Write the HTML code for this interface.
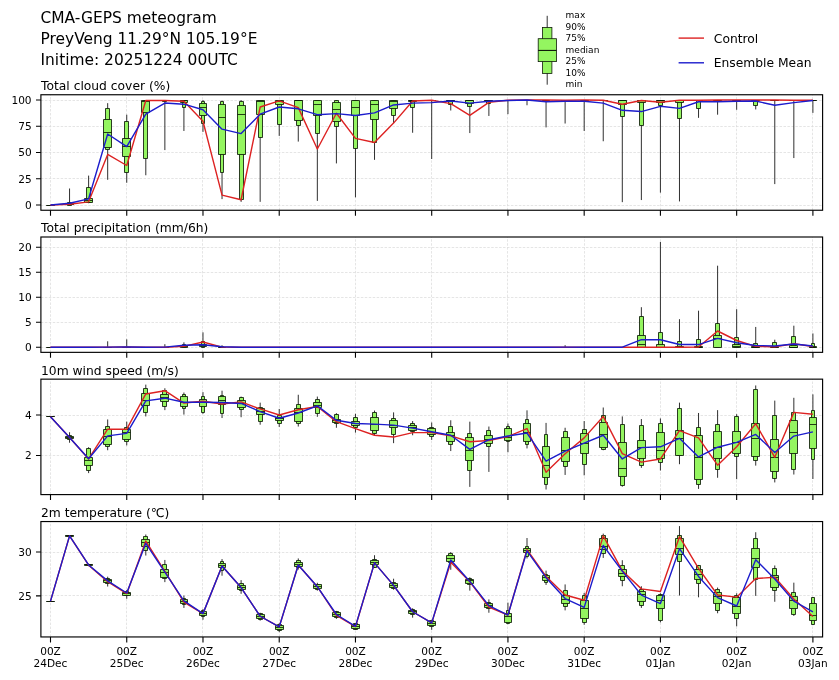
<!DOCTYPE html>
<html lang="en"><head><meta charset="utf-8"><title>CMA-GEPS meteogram</title>
<style>html,body{margin:0;padding:0;background:#fff}svg{display:block;will-change:transform}</style></head>
<body>
<svg width="839" height="680" viewBox="0 0 839 680" font-family="'DejaVu Sans', 'Liberation Sans', sans-serif" fill="#000">
<rect width="839" height="680" fill="#fff"/>
<g font-size="15.45">
<text x="40.5" y="22.5">CMA-GEPS meteogram</text>
<text x="40.5" y="43.6">PreyVeng 11.29°N 105.19°E</text>
<text x="40.5" y="64.7">Initime: 20251224 00UTC</text>
</g>
<g id="legend">
<line x1="547.2" y1="15.8" x2="547.2" y2="84.7" stroke="#303030" stroke-width="1"/>
<rect x="542.6" y="27.5" width="9.3" height="45.9" fill="#94f560" stroke="#0d1a07" stroke-width="0.8"/>
<rect x="538.2" y="38.7" width="18.2" height="22.9" fill="#94f560" stroke="#0d1a07" stroke-width="0.8"/>
<line x1="538.2" y1="50.4" x2="556.4" y2="50.4" stroke="#000" stroke-width="1"/>
<g font-size="9">
<text x="565.6" y="18.45">max</text>
<text x="565.6" y="29.9">90%</text>
<text x="565.6" y="41.35">75%</text>
<text x="565.6" y="52.8">median</text>
<text x="565.6" y="64.25">25%</text>
<text x="565.6" y="75.7">10%</text>
<text x="565.6" y="87.15">min</text>
</g>
<line x1="678.6" y1="38.1" x2="704" y2="38.1" stroke="#dd2222" stroke-width="1.4"/>
<line x1="678.6" y1="62.8" x2="704" y2="62.8" stroke="#1c1ccc" stroke-width="1.4"/>
<g font-size="12.3"><text x="713.8" y="42.5">Control</text><text x="713.8" y="67">Ensemble Mean</text></g>
</g>
<g id="panel0">
<text x="41" y="89.6" font-size="12.3">Total cloud cover (%)</text>
<clipPath id="c0"><rect x="40.9" y="94.75" width="781.7" height="115.5"/></clipPath>
<path d="M40.9 205.5H822.6M40.9 178.5H822.6M40.9 152.5H822.6M40.9 126.5H822.6M40.9 100.5H822.6M50.5 210.25V94.75M126.5 210.25V94.75M202.5 210.25V94.75M279.5 210.25V94.75M355.5 210.25V94.75M431.5 210.25V94.75M507.5 210.25V94.75M584.5 210.25V94.75M660.5 210.25V94.75M736.5 210.25V94.75M812.5 210.25V94.75" stroke="#dadada" stroke-width="0.7" stroke-dasharray="2.5 1.45" fill="none"/>
<g clip-path="url(#c0)">
<path d="M50.5 205V205M69.56 205V188.51M88.62 203.22V175.6M107.68 179.8V103.15M126.74 182.74V114.7M145.8 175.28V100M164.86 150.09V100M183.92 130.97V100M202.98 131.92V100M222.04 199.12V100.52M241.1 201.85V100M260.16 201.85V100M279.22 135.91V100M298.28 141.58V100M317.34 200.91V100M336.4 163.42V100M355.46 197.34V100M374.52 159.85V100M393.58 123.1V100M412.64 132.76V100M431.7 159.01V100M450.76 110.5V100M469.82 133.07V100M488.88 115.96V100M507.94 114.17V100M527 105.25V100M546.06 127.4V100M565.12 123.52V100M584.18 130.97V100M603.24 141.26V100M622.3 202.16V100M641.36 200.06V100M660.42 192.61V100M679.48 201.43V100M698.54 117.85V100M717.6 114.7V100M736.66 109.76V100M755.72 109.45V100M774.78 184.1V100M793.84 158.06V100M812.9 112.91V100" stroke="#303030" stroke-width="1" fill="none"/>
<path d="M48.5 205.5H52.5V205.5H48.5ZM67.5 202.5H71.5V205.5H67.5ZM86.5 187.5H90.5V202.5H86.5ZM105.5 108.5H109.5V149.5H105.5ZM124.5 121.5H128.5V172.5H124.5ZM143.5 100.5H147.5V158.5H143.5ZM162.5 100.5H166.5V101.5H162.5ZM182.5 100.5H185.5V107.5H182.5ZM201.5 101.5H204.5V123.5H201.5ZM220.5 101.5H223.5V172.5H220.5ZM239.5 101.5H243.5V199.5H239.5ZM258.5 100.5H262.5V137.5H258.5ZM277.5 100.5H281.5V124.5H277.5ZM296.5 100.5H300.5V125.5H296.5ZM315.5 100.5H319.5V133.5H315.5ZM334.5 100.5H338.5V126.5H334.5ZM353.5 100.5H357.5V148.5H353.5ZM372.5 100.5H376.5V142.5H372.5ZM391.5 100.5H395.5V115.5H391.5ZM410.5 100.5H414.5V107.5H410.5ZM429.5 100.5H433.5V100.5H429.5ZM448.5 100.5H452.5V104.5H448.5ZM467.5 100.5H471.5V106.5H467.5ZM486.5 100.5H490.5V103.5H486.5ZM506.5 100.5H509.5V100.5H506.5ZM525.5 100.5H528.5V100.5H525.5ZM544.5 100.5H547.5V100.5H544.5ZM563.5 100.5H567.5V100.5H563.5ZM582.5 100.5H586.5V100.5H582.5ZM601.5 100.5H605.5V100.5H601.5ZM620.5 100.5H624.5V116.5H620.5ZM639.5 100.5H643.5V125.5H639.5ZM658.5 100.5H662.5V105.5H658.5ZM677.5 100.5H681.5V118.5H677.5ZM696.5 100.5H700.5V108.5H696.5ZM715.5 100.5H719.5V100.5H715.5ZM734.5 100.5H738.5V100.5H734.5ZM753.5 100.5H757.5V105.5H753.5ZM772.5 100.5H776.5V100.5H772.5ZM791.5 100.5H795.5V100.5H791.5ZM811.5 100.5H814.5V100.5H811.5Z" stroke="#0d1a07" stroke-width="0.85" fill="#94f560"/>
<path d="M46.5 205.5H54.5V205.5H46.5ZM65.5 203.5H73.5V204.5H65.5ZM84.5 198.5H92.5V202.5H84.5ZM103.5 119.5H111.5V147.5H103.5ZM122.5 138.5H130.5V156.5H122.5ZM141.5 100.5H149.5V112.5H141.5ZM160.5 100.5H168.5V100.5H160.5ZM180.5 100.5H187.5V102.5H180.5ZM199.5 103.5H206.5V115.5H199.5ZM218.5 104.5H225.5V154.5H218.5ZM237.5 105.5H245.5V154.5H237.5ZM256.5 100.5H264.5V114.5H256.5ZM275.5 100.5H283.5V104.5H275.5ZM294.5 100.5H302.5V120.5H294.5ZM313.5 100.5H321.5V115.5H313.5ZM332.5 102.5H340.5V121.5H332.5ZM351.5 100.5H359.5V115.5H351.5ZM370.5 100.5H378.5V119.5H370.5ZM389.5 100.5H397.5V108.5H389.5ZM408.5 100.5H416.5V101.5H408.5ZM427.5 100.5H435.5V100.5H427.5ZM446.5 100.5H454.5V101.5H446.5ZM465.5 100.5H473.5V103.5H465.5ZM484.5 100.5H492.5V101.5H484.5ZM504.5 100.5H511.5V100.5H504.5ZM523.5 100.5H530.5V100.5H523.5ZM542.5 100.5H549.5V100.5H542.5ZM561.5 100.5H569.5V100.5H561.5ZM580.5 100.5H588.5V100.5H580.5ZM599.5 100.5H607.5V100.5H599.5ZM618.5 100.5H626.5V104.5H618.5ZM637.5 100.5H645.5V102.5H637.5ZM656.5 100.5H664.5V102.5H656.5ZM675.5 100.5H683.5V102.5H675.5ZM694.5 100.5H702.5V100.5H694.5ZM713.5 100.5H721.5V100.5H713.5ZM732.5 100.5H740.5V100.5H732.5ZM751.5 100.5H759.5V100.5H751.5ZM770.5 100.5H778.5V100.5H770.5ZM789.5 100.5H797.5V100.5H789.5ZM809.5 100.5H816.5V100.5H809.5Z" stroke="#0d1a07" stroke-width="0.85" fill="#94f560"/>
<path d="M46.5 205.5H54.5M65.5 204.5H73.5M84.5 200.5H92.5M103.5 132.5H111.5M122.5 146.5H130.5M141.5 101.5H149.5M160.5 100.5H168.5M180.5 100.5H187.5M199.5 107.5H206.5M218.5 117.5H225.5M237.5 114.5H245.5M256.5 101.5H264.5M275.5 101.5H283.5M294.5 100.5H302.5M313.5 104.5H321.5M332.5 109.5H340.5M351.5 107.5H359.5M370.5 104.5H378.5M389.5 101.5H397.5M408.5 100.5H416.5M427.5 100.5H435.5M446.5 100.5H454.5M465.5 100.5H473.5M484.5 100.5H492.5M504.5 100.5H511.5M523.5 100.5H530.5M542.5 100.5H549.5M561.5 100.5H569.5M580.5 100.5H588.5M599.5 100.5H607.5M618.5 100.5H626.5M637.5 100.5H645.5M656.5 100.5H664.5M675.5 100.5H683.5M694.5 100.5H702.5M713.5 100.5H721.5M732.5 100.5H740.5M751.5 100.5H759.5M770.5 100.5H778.5M789.5 100.5H797.5M809.5 100.5H816.5" stroke="#0d1a07" stroke-width="0.85" fill="none"/>
<polyline points="50.5,205 69.56,204.26 88.62,201.85 107.68,154.39 126.74,165.52 145.8,100.52 164.86,100.52 183.92,101.26 202.98,121.21 222.04,195.13 241.1,199.75 260.16,107.03 279.22,100.84 298.28,107.66 317.34,149.03 336.4,113.23 355.46,138.43 374.52,142.53 393.58,123.1 412.64,101.05 431.7,100.21 450.76,103.57 469.82,115.44 488.88,102.31 507.94,100.21 527,100 546.06,100 565.12,100.21 584.18,100 603.24,100.21 622.3,104.2 641.36,100.52 660.42,102.31 679.48,100.21 698.54,100.21 717.6,100 736.66,100 755.72,100 774.78,100 793.84,100.21 812.9,100.21" stroke="#dd2222" stroke-width="1.4" fill="none" stroke-linejoin="round"/>
<polyline points="50.5,205 69.56,203.22 88.62,198.81 107.68,134.02 126.74,146.62 145.8,114.17 164.86,103.05 183.92,104.2 202.98,109.76 222.04,129.19 241.1,133.6 260.16,114.17 279.22,107.03 298.28,108.82 317.34,114.7 336.4,113.65 355.46,115.54 374.52,112.91 393.58,104.94 412.64,103.15 431.7,102.62 450.76,101.05 469.82,103.15 488.88,101.26 507.94,100.52 527,100 546.06,101.78 565.12,101.26 584.18,101.26 603.24,103.15 622.3,110.29 641.36,111.55 660.42,106.3 679.48,108.4 698.54,101.78 717.6,101.78 736.66,101.26 755.72,101.05 774.78,105.25 793.84,102.62 812.9,100.52" stroke="#1c1ccc" stroke-width="1.4" fill="none" stroke-linejoin="round"/>
</g>
<rect x="40.9" y="94.75" width="781.7" height="115.5" fill="none" stroke="#000" stroke-width="1.15"/>
<path d="M40.9 205H36M40.9 178.75H36M40.9 152.5H36M40.9 126.25H36M40.9 100H36M50.5 210.25V215.75M126.74 210.25V215.75M202.98 210.25V215.75M279.22 210.25V215.75M355.46 210.25V215.75M431.7 210.25V215.75M507.94 210.25V215.75M584.18 210.25V215.75M660.42 210.25V215.75M736.66 210.25V215.75M812.9 210.25V215.75" stroke="#000" stroke-width="1.1" fill="none"/>
<g font-size="10.55" text-anchor="end">
<text x="31.6" y="208.9">0</text>
<text x="31.6" y="182.65">25</text>
<text x="31.6" y="156.4">50</text>
<text x="31.6" y="130.15">75</text>
<text x="31.6" y="103.9">100</text>
</g>
</g>
<g id="panel1">
<text x="41" y="231.7" font-size="12.3">Total precipitation (mm/6h)</text>
<clipPath id="c1"><rect x="40.9" y="237" width="781.7" height="115.35"/></clipPath>
<path d="M40.9 347.5H822.6M40.9 322.5H822.6M40.9 297.5H822.6M40.9 272.5H822.6M40.9 247.5H822.6M50.5 352.35V237M126.5 352.35V237M202.5 352.35V237M279.5 352.35V237M355.5 352.35V237M431.5 352.35V237M507.5 352.35V237M584.5 352.35V237M660.5 352.35V237M736.5 352.35V237M812.5 352.35V237" stroke="#dadada" stroke-width="0.7" stroke-dasharray="2.5 1.45" fill="none"/>
<g clip-path="url(#c1)">
<path d="M50.5 347.2V347.2M69.56 347.2V347.2M88.62 347.2V347.2M107.68 347.2V341.3M126.74 347.2V339.35M145.8 347.2V347.2M164.86 347.2V344.2M183.92 347.2V342.35M202.98 347.2V332.35M222.04 347.2V345.25M241.1 347.2V347.2M260.16 347.2V347.2M279.22 347.2V347.2M298.28 347.2V347.2M317.34 347.2V347.2M336.4 347.2V347.2M355.46 347.2V347.2M374.52 347.2V347.2M393.58 347.2V347.2M412.64 347.2V347.2M431.7 347.2V347.2M450.76 347.2V347.2M469.82 347.2V347.2M488.88 347.2V347.2M507.94 347.2V347.2M527 347.2V347.2M546.06 347.2V347.2M565.12 347.2V345.2M584.18 347.2V347.2M603.24 347.2V347.2M622.3 347.2V347.2M641.36 347.2V307.2M660.42 347.2V241.95M679.48 347.2V319.2M698.54 347.2V310.7M717.6 347.2V265.7M736.66 347.2V309.2M755.72 347.2V326.95M774.78 347.2V339.7M793.84 347.2V325.7M812.9 347.2V333.45" stroke="#303030" stroke-width="1" fill="none"/>
<path d="M48.5 347.5H52.5V347.5H48.5ZM67.5 347.5H71.5V347.5H67.5ZM86.5 347.5H90.5V347.5H86.5ZM105.5 347.5H109.5V347.5H105.5ZM124.5 347.5H128.5V347.5H124.5ZM143.5 347.5H147.5V347.5H143.5ZM162.5 347.5H166.5V347.5H162.5ZM182.5 344.5H185.5V347.5H182.5ZM201.5 341.5H204.5V347.5H201.5ZM220.5 346.5H223.5V347.5H220.5ZM239.5 347.5H243.5V347.5H239.5ZM258.5 347.5H262.5V347.5H258.5ZM277.5 347.5H281.5V347.5H277.5ZM296.5 347.5H300.5V347.5H296.5ZM315.5 347.5H319.5V347.5H315.5ZM334.5 347.5H338.5V347.5H334.5ZM353.5 347.5H357.5V347.5H353.5ZM372.5 347.5H376.5V347.5H372.5ZM391.5 347.5H395.5V347.5H391.5ZM410.5 347.5H414.5V347.5H410.5ZM429.5 347.5H433.5V347.5H429.5ZM448.5 347.5H452.5V347.5H448.5ZM467.5 347.5H471.5V347.5H467.5ZM486.5 347.5H490.5V347.5H486.5ZM506.5 347.5H509.5V347.5H506.5ZM525.5 347.5H528.5V347.5H525.5ZM544.5 347.5H547.5V347.5H544.5ZM563.5 347.5H567.5V347.5H563.5ZM582.5 347.5H586.5V347.5H582.5ZM601.5 347.5H605.5V347.5H601.5ZM620.5 347.5H624.5V347.5H620.5ZM639.5 316.5H643.5V347.5H639.5ZM658.5 332.5H662.5V347.5H658.5ZM677.5 341.5H681.5V347.5H677.5ZM696.5 339.5H700.5V347.5H696.5ZM715.5 323.5H719.5V347.5H715.5ZM734.5 337.5H738.5V347.5H734.5ZM753.5 343.5H757.5V347.5H753.5ZM772.5 342.5H776.5V347.5H772.5ZM791.5 336.5H795.5V347.5H791.5ZM811.5 343.5H814.5V347.5H811.5Z" stroke="#0d1a07" stroke-width="0.85" fill="#94f560"/>
<path d="M46.5 347.5H54.5V347.5H46.5ZM65.5 347.5H73.5V347.5H65.5ZM84.5 347.5H92.5V347.5H84.5ZM103.5 347.5H111.5V347.5H103.5ZM122.5 347.5H130.5V347.5H122.5ZM141.5 347.5H149.5V347.5H141.5ZM160.5 347.5H168.5V347.5H160.5ZM180.5 345.5H187.5V347.5H180.5ZM199.5 344.5H206.5V346.5H199.5ZM218.5 347.5H225.5V347.5H218.5ZM237.5 347.5H245.5V347.5H237.5ZM256.5 347.5H264.5V347.5H256.5ZM275.5 347.5H283.5V347.5H275.5ZM294.5 347.5H302.5V347.5H294.5ZM313.5 347.5H321.5V347.5H313.5ZM332.5 347.5H340.5V347.5H332.5ZM351.5 347.5H359.5V347.5H351.5ZM370.5 347.5H378.5V347.5H370.5ZM389.5 347.5H397.5V347.5H389.5ZM408.5 347.5H416.5V347.5H408.5ZM427.5 347.5H435.5V347.5H427.5ZM446.5 347.5H454.5V347.5H446.5ZM465.5 347.5H473.5V347.5H465.5ZM484.5 347.5H492.5V347.5H484.5ZM504.5 347.5H511.5V347.5H504.5ZM523.5 347.5H530.5V347.5H523.5ZM542.5 347.5H549.5V347.5H542.5ZM561.5 347.5H569.5V347.5H561.5ZM580.5 347.5H588.5V347.5H580.5ZM599.5 347.5H607.5V347.5H599.5ZM618.5 347.5H626.5V347.5H618.5ZM637.5 335.5H645.5V347.5H637.5ZM656.5 344.5H664.5V347.5H656.5ZM675.5 346.5H683.5V347.5H675.5ZM694.5 346.5H702.5V347.5H694.5ZM713.5 335.5H721.5V347.5H713.5ZM732.5 344.5H740.5V347.5H732.5ZM751.5 346.5H759.5V347.5H751.5ZM770.5 346.5H778.5V347.5H770.5ZM789.5 345.5H797.5V347.5H789.5ZM809.5 346.5H816.5V347.5H809.5Z" stroke="#0d1a07" stroke-width="0.85" fill="#94f560"/>
<path d="M46.5 347.5H54.5M65.5 347.5H73.5M84.5 347.5H92.5M103.5 347.5H111.5M122.5 347.5H130.5M141.5 347.5H149.5M160.5 347.5H168.5M180.5 346.5H187.5M199.5 345.5H206.5M218.5 347.5H225.5M237.5 347.5H245.5M256.5 347.5H264.5M275.5 347.5H283.5M294.5 347.5H302.5M313.5 347.5H321.5M332.5 347.5H340.5M351.5 347.5H359.5M370.5 347.5H378.5M389.5 347.5H397.5M408.5 347.5H416.5M427.5 347.5H435.5M446.5 347.5H454.5M465.5 347.5H473.5M484.5 347.5H492.5M504.5 347.5H511.5M523.5 347.5H530.5M542.5 347.5H549.5M561.5 347.5H569.5M580.5 347.5H588.5M599.5 347.5H607.5M618.5 347.5H626.5M637.5 344.5H645.5M656.5 347.5H664.5M675.5 347.5H683.5M694.5 347.5H702.5M713.5 338.5H721.5M732.5 346.5H740.5M751.5 347.5H759.5M770.5 347.5H778.5M789.5 347.5H797.5M809.5 347.5H816.5" stroke="#0d1a07" stroke-width="0.85" fill="none"/>
<polyline points="50.5,347.2 69.56,347.2 88.62,347.2 107.68,347.1 126.74,347.05 145.8,347.2 164.86,347.2 183.92,346.35 202.98,342.05 222.04,347.1 241.1,347.2 260.16,347.2 279.22,347.2 298.28,347.2 317.34,347.2 336.4,347.2 355.46,347.2 374.52,347.2 393.58,347.2 412.64,347.2 431.7,347.2 450.76,347.2 469.82,347.2 488.88,347.2 507.94,347.2 527,347.2 546.06,347.2 565.12,347.2 584.18,347.2 603.24,347.2 622.3,347.2 641.36,347.2 660.42,347.2 679.48,347.2 698.54,346.95 717.6,331 736.66,340.5 755.72,346.3 774.78,346.85 793.84,343.7 812.9,346.5" stroke="#dd2222" stroke-width="1.4" fill="none" stroke-linejoin="round"/>
<polyline points="50.5,347.2 69.56,347.2 88.62,347.2 107.68,347.1 126.74,347.05 145.8,347.2 164.86,347.1 183.92,345.25 202.98,344.7 222.04,346.7 241.1,347.2 260.16,347.2 279.22,347.2 298.28,347.2 317.34,347.2 336.4,347.2 355.46,347.2 374.52,347.2 393.58,347.2 412.64,347.2 431.7,347.2 450.76,347.2 469.82,347.2 488.88,347.2 507.94,347.2 527,347.2 546.06,347.2 565.12,347.15 584.18,347.2 603.24,347.2 622.3,347.2 641.36,339.7 660.42,339.7 679.48,344.55 698.54,344.55 717.6,338.4 736.66,342.8 755.72,345.45 774.78,345.95 793.84,344.05 812.9,345.95" stroke="#1c1ccc" stroke-width="1.4" fill="none" stroke-linejoin="round"/>
</g>
<rect x="40.9" y="237" width="781.7" height="115.35" fill="none" stroke="#000" stroke-width="1.15"/>
<path d="M40.9 347.2H36M40.9 322.2H36M40.9 297.2H36M40.9 272.2H36M40.9 247.2H36M50.5 352.35V357.85M126.74 352.35V357.85M202.98 352.35V357.85M279.22 352.35V357.85M355.46 352.35V357.85M431.7 352.35V357.85M507.94 352.35V357.85M584.18 352.35V357.85M660.42 352.35V357.85M736.66 352.35V357.85M812.9 352.35V357.85" stroke="#000" stroke-width="1.1" fill="none"/>
<g font-size="10.55" text-anchor="end">
<text x="31.6" y="351.1">0</text>
<text x="31.6" y="326.1">5</text>
<text x="31.6" y="301.1">10</text>
<text x="31.6" y="276.1">15</text>
<text x="31.6" y="251.1">20</text>
</g>
</g>
<g id="panel2">
<text x="41" y="374.6" font-size="12.3">10m wind speed (m/s)</text>
<clipPath id="c2"><rect x="40.9" y="379.15" width="781.7" height="115.45"/></clipPath>
<path d="M40.9 455.5H822.6M40.9 415.5H822.6M50.5 494.6V379.15M126.5 494.6V379.15M202.5 494.6V379.15M279.5 494.6V379.15M355.5 494.6V379.15M431.5 494.6V379.15M507.5 494.6V379.15M584.5 494.6V379.15M660.5 494.6V379.15M736.5 494.6V379.15M812.5 494.6V379.15" stroke="#dadada" stroke-width="0.7" stroke-dasharray="2.5 1.45" fill="none"/>
<g clip-path="url(#c2)">
<path d="M50.5 416.82V416.82M69.56 442.74V432.21M88.62 473.12V447.2M107.68 450.24V419.45M126.74 445.38V421.68M145.8 416.42V384.62M164.86 410.14V388.27M183.92 414.6V392.52M202.98 413.79V392.12M222.04 418.04V390.7M241.1 417.23V396.57M260.16 424.72V402.65M279.22 426.95V408.93M298.28 426.54V394.75M317.34 416.82V396.57M336.4 427.76V413.18M355.46 432.62V413.79M374.52 435.25V410.55M393.58 443.15V412.37M412.64 435.25V421.07M431.7 439.91V422.49M450.76 451.05V420.26M469.82 486.89V421.68M488.88 471.9V426.54M507.94 452.26V423.5M527 448.41V410.34M546.06 489.52V422.9M565.12 474.94V427.76M584.18 475.35V421.07M603.24 450.24V407.51M622.3 486.69V416.42M641.36 467.85V419.05M660.42 470.49V418.44M679.48 464.21V402.65M698.54 488.91V412.98M717.6 477.77V410.14M736.66 479.19V414.19M755.72 465.62V385.44M774.78 482.43V400.62M793.84 474.54V397.79M812.9 478.99V394.35" stroke="#303030" stroke-width="1" fill="none"/>
<path d="M48.5 416.5H52.5V416.5H48.5ZM67.5 435.5H71.5V439.5H67.5ZM86.5 448.5H90.5V470.5H86.5ZM105.5 426.5H109.5V446.5H105.5ZM124.5 427.5H128.5V441.5H124.5ZM143.5 388.5H147.5V412.5H143.5ZM162.5 390.5H166.5V406.5H162.5ZM182.5 394.5H185.5V408.5H182.5ZM201.5 396.5H204.5V412.5H201.5ZM220.5 395.5H223.5V413.5H220.5ZM239.5 397.5H243.5V409.5H239.5ZM258.5 407.5H262.5V421.5H258.5ZM277.5 415.5H281.5V423.5H277.5ZM296.5 404.5H300.5V423.5H296.5ZM315.5 399.5H319.5V413.5H315.5ZM334.5 414.5H338.5V423.5H334.5ZM353.5 417.5H357.5V427.5H353.5ZM372.5 412.5H376.5V433.5H372.5ZM391.5 418.5H395.5V434.5H391.5ZM410.5 423.5H414.5V431.5H410.5ZM429.5 427.5H433.5V436.5H429.5ZM448.5 426.5H452.5V444.5H448.5ZM467.5 433.5H471.5V470.5H467.5ZM486.5 430.5H490.5V446.5H486.5ZM506.5 426.5H509.5V441.5H506.5ZM525.5 419.5H528.5V444.5H525.5ZM544.5 434.5H547.5V484.5H544.5ZM563.5 431.5H567.5V466.5H563.5ZM582.5 429.5H586.5V464.5H582.5ZM601.5 415.5H605.5V449.5H601.5ZM620.5 424.5H624.5V485.5H620.5ZM639.5 425.5H643.5V465.5H639.5ZM658.5 423.5H662.5V462.5H658.5ZM677.5 408.5H681.5V455.5H677.5ZM696.5 427.5H700.5V484.5H696.5ZM715.5 424.5H719.5V469.5H715.5ZM734.5 416.5H738.5V456.5H734.5ZM753.5 389.5H757.5V460.5H753.5ZM772.5 415.5H776.5V478.5H772.5ZM791.5 412.5H795.5V469.5H791.5ZM811.5 410.5H814.5V459.5H811.5Z" stroke="#0d1a07" stroke-width="0.85" fill="#94f560"/>
<path d="M46.5 416.5H54.5V416.5H46.5ZM65.5 436.5H73.5V438.5H65.5ZM84.5 457.5H92.5V465.5H84.5ZM103.5 429.5H111.5V444.5H103.5ZM122.5 429.5H130.5V439.5H122.5ZM141.5 393.5H149.5V405.5H141.5ZM160.5 394.5H168.5V401.5H160.5ZM180.5 396.5H187.5V406.5H180.5ZM199.5 399.5H206.5V406.5H199.5ZM218.5 396.5H225.5V404.5H218.5ZM237.5 400.5H245.5V407.5H237.5ZM256.5 408.5H264.5V414.5H256.5ZM275.5 417.5H283.5V420.5H275.5ZM294.5 408.5H302.5V421.5H294.5ZM313.5 402.5H321.5V407.5H313.5ZM332.5 419.5H340.5V422.5H332.5ZM351.5 421.5H359.5V425.5H351.5ZM370.5 417.5H378.5V430.5H370.5ZM389.5 420.5H397.5V427.5H389.5ZM408.5 425.5H416.5V430.5H408.5ZM427.5 428.5H435.5V434.5H427.5ZM446.5 432.5H454.5V441.5H446.5ZM465.5 437.5H473.5V460.5H465.5ZM484.5 435.5H492.5V443.5H484.5ZM504.5 428.5H511.5V440.5H504.5ZM523.5 423.5H530.5V441.5H523.5ZM542.5 446.5H549.5V477.5H542.5ZM561.5 437.5H569.5V461.5H561.5ZM580.5 433.5H588.5V453.5H580.5ZM599.5 422.5H607.5V447.5H599.5ZM618.5 442.5H626.5V476.5H618.5ZM637.5 440.5H645.5V458.5H637.5ZM656.5 432.5H664.5V458.5H656.5ZM675.5 430.5H683.5V455.5H675.5ZM694.5 435.5H702.5V479.5H694.5ZM713.5 431.5H721.5V458.5H713.5ZM732.5 431.5H740.5V453.5H732.5ZM751.5 423.5H759.5V456.5H751.5ZM770.5 439.5H778.5V471.5H770.5ZM789.5 420.5H797.5V453.5H789.5ZM809.5 417.5H816.5V448.5H809.5Z" stroke="#0d1a07" stroke-width="0.85" fill="#94f560"/>
<path d="M46.5 416.5H54.5M65.5 437.5H73.5M84.5 460.5H92.5M103.5 436.5H111.5M122.5 432.5H130.5M141.5 400.5H149.5M160.5 397.5H168.5M180.5 402.5H187.5M199.5 402.5H206.5M218.5 400.5H225.5M237.5 403.5H245.5M256.5 411.5H264.5M275.5 418.5H283.5M294.5 412.5H302.5M313.5 405.5H321.5M332.5 420.5H340.5M351.5 423.5H359.5M370.5 424.5H378.5M389.5 425.5H397.5M408.5 427.5H416.5M427.5 432.5H435.5M446.5 435.5H454.5M465.5 450.5H473.5M484.5 439.5H492.5M504.5 437.5H511.5M523.5 432.5H530.5M542.5 465.5H549.5M561.5 450.5H569.5M580.5 443.5H588.5M599.5 434.5H607.5M618.5 468.5H626.5M637.5 447.5H645.5M656.5 450.5H664.5M675.5 438.5H683.5M694.5 457.5H702.5M713.5 447.5H721.5M732.5 442.5H740.5M751.5 438.5H759.5M770.5 457.5H778.5M789.5 432.5H797.5M809.5 424.5H816.5" stroke="#0d1a07" stroke-width="0.85" fill="none"/>
<polyline points="50.5,416.82 69.56,437.48 88.62,458.94 107.68,429.18 126.74,429.18 145.8,393.94 164.86,390.7 183.92,403.05 202.98,401.23 222.04,404.06 241.1,401.84 260.16,408.93 279.22,415 298.28,409.74 317.34,406.5 336.4,421.68 355.46,428.57 374.52,435.25 393.58,437.07 412.64,432.62 431.7,432.62 450.76,435.86 469.82,441.73 488.88,440.51 507.94,436.46 527,428.57 546.06,472.31 565.12,453.68 584.18,437.88 603.24,416.42 622.3,453.68 641.36,462.18 660.42,458.94 679.48,430.59 698.54,437.88 717.6,465.22 736.66,446.79 755.72,423.71 774.78,457.32 793.84,412.37 812.9,414.19" stroke="#dd2222" stroke-width="1.4" fill="none" stroke-linejoin="round"/>
<polyline points="50.5,416.82 69.56,437.48 88.62,458.74 107.68,435.86 126.74,433.43 145.8,400.82 164.86,398.19 183.92,402.24 202.98,402.24 222.04,402.44 241.1,403.46 260.16,411.56 279.22,418.24 298.28,412.98 317.34,405.89 336.4,420.26 355.46,423.5 374.52,424.11 393.58,425.12 412.64,428.16 431.7,431.81 450.76,435.25 469.82,449.43 488.88,439.7 507.94,436.06 527,433.02 546.06,461.17 565.12,451.05 584.18,443.15 603.24,435.25 622.3,458.94 641.36,447.6 660.42,446.79 679.48,438.29 698.54,456.92 717.6,447.2 736.66,442.34 755.72,434.44 774.78,452.46 793.84,436.06 812.9,431.81" stroke="#1c1ccc" stroke-width="1.4" fill="none" stroke-linejoin="round"/>
</g>
<rect x="40.9" y="379.15" width="781.7" height="115.45" fill="none" stroke="#000" stroke-width="1.15"/>
<path d="M40.9 455.5H36M40.9 415H36M50.5 494.6V500.1M126.74 494.6V500.1M202.98 494.6V500.1M279.22 494.6V500.1M355.46 494.6V500.1M431.7 494.6V500.1M507.94 494.6V500.1M584.18 494.6V500.1M660.42 494.6V500.1M736.66 494.6V500.1M812.9 494.6V500.1" stroke="#000" stroke-width="1.1" fill="none"/>
<g font-size="10.55" text-anchor="end">
<text x="31.6" y="459.4">2</text>
<text x="31.6" y="418.9">4</text>
</g>
</g>
<g id="panel3">
<text x="41" y="516.9" font-size="12.3">2m temperature (℃)</text>
<clipPath id="c3"><rect x="40.9" y="521.55" width="781.7" height="115.4"/></clipPath>
<path d="M40.9 595.5H822.6M40.9 552.5H822.6M50.5 636.95V521.55M126.5 636.95V521.55M202.5 636.95V521.55M279.5 636.95V521.55M355.5 636.95V521.55M431.5 636.95V521.55M507.5 636.95V521.55M584.5 636.95V521.55M660.5 636.95V521.55M736.5 636.95V521.55M812.5 636.95V521.55" stroke="#dadada" stroke-width="0.7" stroke-dasharray="2.5 1.45" fill="none"/>
<g clip-path="url(#c3)">
<path d="M50.5 601.16V601.16M69.56 536.26V535.39M88.62 566.26V563.63M107.68 586.52V576.69M126.74 598.79V590.02M145.8 555.56V534.51M164.86 582.13V559.94M183.92 607.91V595.55M202.98 619.75V609.05M222.04 575.73V559.07M241.1 593.8V580.11M260.16 620.63V612.74M279.22 632.12V623.26M298.28 569.59V558.45M317.34 590.64V582.75M336.4 618.88V610.9M355.46 629.84V623.26M374.52 567.92V555.21M393.58 589.76V578.71M412.64 617.65V608.27M431.7 629.84V619.75M450.76 569.77V552.05M469.82 590.64V577.31M488.88 612.74V599.41M507.94 624.23V602.65M527 558.45V538.02M546.06 584.94V570.64M565.12 610.37V584.41M584.18 624.75V592.92M603.24 557.93V533.63M622.3 586.25V560.21M641.36 607.91V586.25M660.42 622.39V593.27M679.48 595.55V526.09M698.54 597.3V564.94M717.6 613.26V587.57M736.66 626.33V593.27M755.72 595.9V532.23M774.78 601.78V565.47M793.84 615.9V582.66M812.9 625.1V597.13" stroke="#303030" stroke-width="1" fill="none"/>
<path d="M48.5 601.5H52.5V601.5H48.5ZM67.5 535.5H71.5V536.5H67.5ZM86.5 564.5H90.5V565.5H86.5ZM105.5 578.5H109.5V583.5H105.5ZM124.5 591.5H128.5V595.5H124.5ZM143.5 536.5H147.5V550.5H143.5ZM162.5 564.5H166.5V578.5H162.5ZM182.5 598.5H185.5V604.5H182.5ZM201.5 610.5H204.5V616.5H201.5ZM220.5 561.5H223.5V570.5H220.5ZM239.5 583.5H243.5V590.5H239.5ZM258.5 613.5H262.5V619.5H258.5ZM277.5 624.5H281.5V630.5H277.5ZM296.5 560.5H300.5V567.5H296.5ZM315.5 584.5H319.5V589.5H315.5ZM334.5 611.5H338.5V617.5H334.5ZM353.5 623.5H357.5V629.5H353.5ZM372.5 559.5H376.5V567.5H372.5ZM391.5 582.5H395.5V588.5H391.5ZM410.5 609.5H414.5V614.5H410.5ZM429.5 620.5H433.5V626.5H429.5ZM448.5 553.5H452.5V562.5H448.5ZM467.5 578.5H471.5V584.5H467.5ZM486.5 602.5H490.5V608.5H486.5ZM506.5 610.5H509.5V623.5H506.5ZM525.5 546.5H528.5V556.5H525.5ZM544.5 574.5H547.5V582.5H544.5ZM563.5 590.5H567.5V606.5H563.5ZM582.5 595.5H586.5V622.5H582.5ZM601.5 535.5H605.5V553.5H601.5ZM620.5 565.5H624.5V580.5H620.5ZM639.5 589.5H643.5V605.5H639.5ZM658.5 594.5H662.5V620.5H658.5ZM677.5 535.5H681.5V561.5H677.5ZM696.5 565.5H700.5V583.5H696.5ZM715.5 589.5H719.5V610.5H715.5ZM734.5 595.5H738.5V618.5H734.5ZM753.5 538.5H757.5V579.5H753.5ZM772.5 568.5H776.5V590.5H772.5ZM791.5 592.5H795.5V614.5H791.5ZM811.5 597.5H814.5V624.5H811.5Z" stroke="#0d1a07" stroke-width="0.85" fill="#94f560"/>
<path d="M46.5 601.5H54.5V601.5H46.5ZM65.5 535.5H73.5V536.5H65.5ZM84.5 564.5H92.5V565.5H84.5ZM103.5 579.5H111.5V582.5H103.5ZM122.5 592.5H130.5V595.5H122.5ZM141.5 539.5H149.5V546.5H141.5ZM160.5 569.5H168.5V577.5H160.5ZM180.5 599.5H187.5V603.5H180.5ZM199.5 611.5H206.5V615.5H199.5ZM218.5 563.5H225.5V567.5H218.5ZM237.5 585.5H245.5V589.5H237.5ZM256.5 614.5H264.5V618.5H256.5ZM275.5 625.5H283.5V629.5H275.5ZM294.5 562.5H302.5V566.5H294.5ZM313.5 584.5H321.5V588.5H313.5ZM332.5 612.5H340.5V616.5H332.5ZM351.5 624.5H359.5V628.5H351.5ZM370.5 560.5H378.5V564.5H370.5ZM389.5 583.5H397.5V587.5H389.5ZM408.5 610.5H416.5V613.5H408.5ZM427.5 621.5H435.5V625.5H427.5ZM446.5 555.5H454.5V561.5H446.5ZM465.5 579.5H473.5V583.5H465.5ZM484.5 603.5H492.5V607.5H484.5ZM504.5 613.5H511.5V622.5H504.5ZM523.5 548.5H530.5V552.5H523.5ZM542.5 575.5H549.5V580.5H542.5ZM561.5 595.5H569.5V603.5H561.5ZM580.5 600.5H588.5V618.5H580.5ZM599.5 538.5H607.5V549.5H599.5ZM618.5 569.5H626.5V576.5H618.5ZM637.5 591.5H645.5V601.5H637.5ZM656.5 595.5H664.5V608.5H656.5ZM675.5 538.5H683.5V554.5H675.5ZM694.5 569.5H702.5V579.5H694.5ZM713.5 592.5H721.5V603.5H713.5ZM732.5 597.5H740.5V613.5H732.5ZM751.5 548.5H759.5V567.5H751.5ZM770.5 575.5H778.5V587.5H770.5ZM789.5 596.5H797.5V608.5H789.5ZM809.5 603.5H816.5V620.5H809.5Z" stroke="#0d1a07" stroke-width="0.85" fill="#94f560"/>
<path d="M46.5 601.5H54.5M65.5 535.5H73.5M84.5 564.5H92.5M103.5 580.5H111.5M122.5 593.5H130.5M141.5 542.5H149.5M160.5 572.5H168.5M180.5 601.5H187.5M199.5 613.5H206.5M218.5 565.5H225.5M237.5 587.5H245.5M256.5 616.5H264.5M275.5 627.5H283.5M294.5 564.5H302.5M313.5 586.5H321.5M332.5 614.5H340.5M351.5 626.5H359.5M370.5 562.5H378.5M389.5 585.5H397.5M408.5 611.5H416.5M427.5 623.5H435.5M446.5 558.5H454.5M465.5 580.5H473.5M484.5 605.5H492.5M504.5 616.5H511.5M523.5 550.5H530.5M542.5 577.5H549.5M561.5 599.5H569.5M580.5 608.5H588.5M599.5 546.5H607.5M618.5 573.5H626.5M637.5 594.5H645.5M656.5 600.5H664.5M675.5 548.5H683.5M694.5 574.5H702.5M713.5 596.5H721.5M732.5 606.5H740.5M751.5 558.5H759.5M770.5 577.5H778.5M789.5 600.5H797.5M809.5 615.5H816.5" stroke="#0d1a07" stroke-width="0.85" fill="none"/>
<polyline points="50.5,601.16 69.56,535.83 88.62,565.2 107.68,581.69 126.74,593.71 145.8,541.09 164.86,571.34 183.92,602.04 202.98,613.62 222.04,566.08 241.1,587.57 260.16,616.25 279.22,626.86 298.28,564.94 317.34,586.69 336.4,615.37 355.46,626.68 374.52,562.84 393.58,585.38 412.64,611.77 431.7,622.91 450.76,562.31 469.82,581.78 488.88,607.04 507.94,615.02 527,549.59 546.06,576.43 565.12,595.02 584.18,600.28 603.24,535.83 622.3,570.82 641.36,588.88 660.42,591.51 679.48,536.7 698.54,568.45 717.6,595.02 736.66,597.13 755.72,578.54 774.78,577.31 793.84,599.06 812.9,616.6" stroke="#dd2222" stroke-width="1.4" fill="none" stroke-linejoin="round"/>
<polyline points="50.5,601.16 69.56,535.83 88.62,564.94 107.68,580.9 126.74,593.01 145.8,543.28 164.86,572.05 183.92,600.81 202.98,613.62 222.04,566.08 241.1,587.57 260.16,616.25 279.22,626.86 298.28,564.94 317.34,586.69 336.4,614.49 355.46,626.33 374.52,562.84 393.58,585.38 412.64,611.77 431.7,622.91 450.76,559.94 469.82,581.43 488.88,605.63 507.94,615.02 527,550.82 546.06,577.66 565.12,598.53 584.18,607.39 603.24,545.47 622.3,571.17 641.36,595.02 660.42,603.53 679.48,548.72 698.54,576.43 717.6,597.65 736.66,605.99 755.72,559.68 774.78,579.06 793.84,601.16 812.9,611.77" stroke="#1c1ccc" stroke-width="1.4" fill="none" stroke-linejoin="round"/>
</g>
<rect x="40.9" y="521.55" width="781.7" height="115.4" fill="none" stroke="#000" stroke-width="1.15"/>
<path d="M40.9 595.9H36M40.9 552.05H36M50.5 636.95V642.45M126.74 636.95V642.45M202.98 636.95V642.45M279.22 636.95V642.45M355.46 636.95V642.45M431.7 636.95V642.45M507.94 636.95V642.45M584.18 636.95V642.45M660.42 636.95V642.45M736.66 636.95V642.45M812.9 636.95V642.45" stroke="#000" stroke-width="1.1" fill="none"/>
<g font-size="10.55" text-anchor="end">
<text x="31.6" y="599.8">25</text>
<text x="31.6" y="555.95">30</text>
</g>
<g font-size="10.55" text-anchor="middle">
<text x="50.5" y="654.6">00Z</text><text x="50.5" y="666.6">24Dec</text>
<text x="126.74" y="654.6">00Z</text><text x="126.74" y="666.6">25Dec</text>
<text x="202.98" y="654.6">00Z</text><text x="202.98" y="666.6">26Dec</text>
<text x="279.22" y="654.6">00Z</text><text x="279.22" y="666.6">27Dec</text>
<text x="355.46" y="654.6">00Z</text><text x="355.46" y="666.6">28Dec</text>
<text x="431.7" y="654.6">00Z</text><text x="431.7" y="666.6">29Dec</text>
<text x="507.94" y="654.6">00Z</text><text x="507.94" y="666.6">30Dec</text>
<text x="584.18" y="654.6">00Z</text><text x="584.18" y="666.6">31Dec</text>
<text x="660.42" y="654.6">00Z</text><text x="660.42" y="666.6">01Jan</text>
<text x="736.66" y="654.6">00Z</text><text x="736.66" y="666.6">02Jan</text>
<text x="812.9" y="654.6">00Z</text><text x="812.9" y="666.6">03Jan</text>
</g>
</g>
</svg>
</body></html>
